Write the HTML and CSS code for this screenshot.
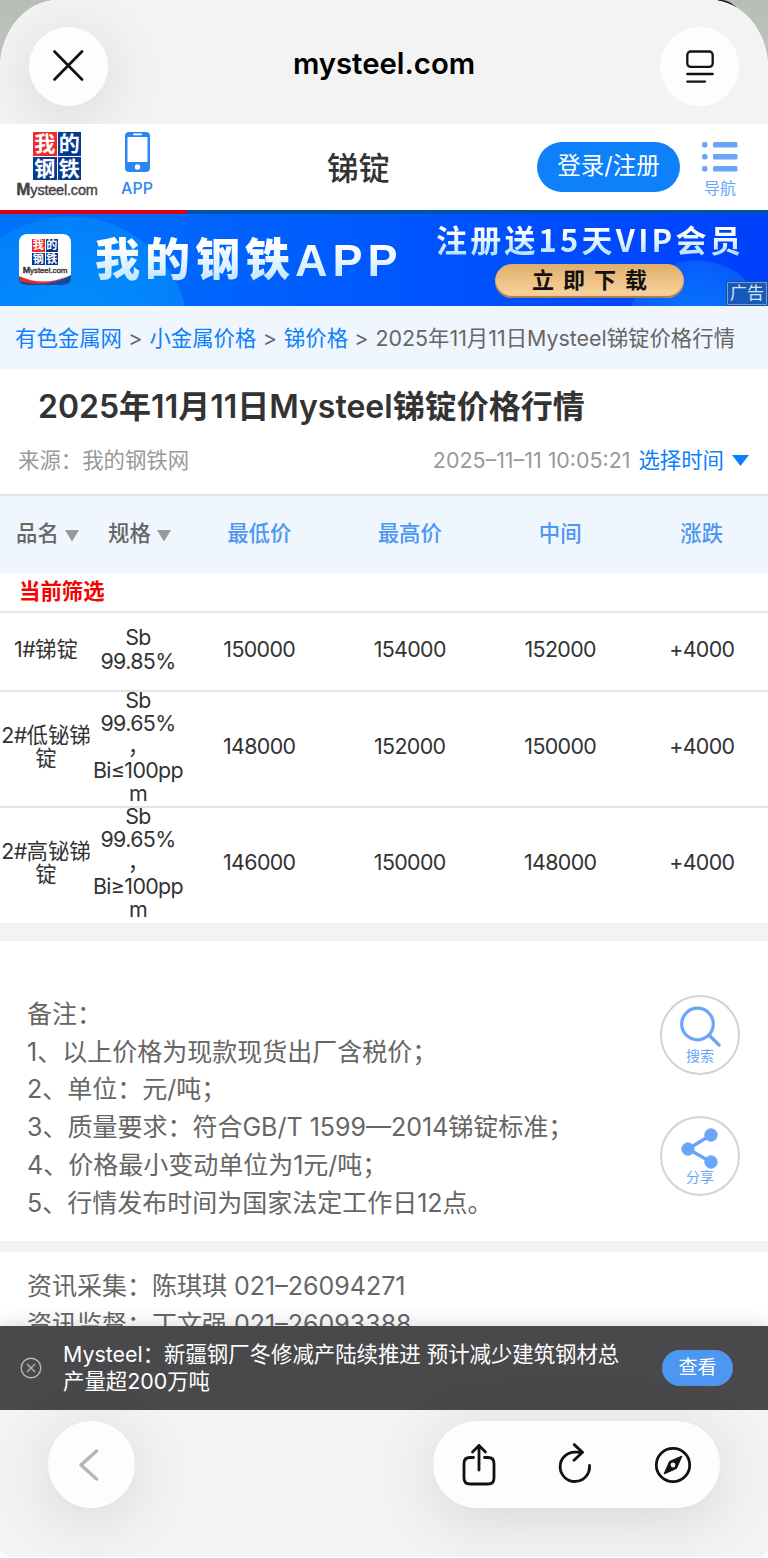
FILE: index.html
```html
<!DOCTYPE html>
<html lang="zh-CN">
<head>
    <meta charset="UTF-8">
    <meta name="viewport" content="width=device-width, initial-scale=1.0">
    <title>2025年11月11日Mysteel锑锭价格行情</title>
    <link rel="stylesheet" href="styles.css">
</head>
<body>
    <svg class="backdrop-mark" width="20" height="12" viewBox="0 0 20 12"><path d="M0 1C8 1 13 4 17 8" fill="none" stroke="#222" stroke-width="3"/></svg>
    <div class="sheet">
        <!-- 顶部浏览器栏 -->
        <div class="browser-top">
            <button class="round-btn shadow">
                <svg width="32" height="32" viewBox="0 0 32 32"><path d="M1.5 1.5L29 29.5M29 1.5L1.5 29.5" stroke="#111" stroke-width="2.7" stroke-linecap="round"/></svg>
            </button>
            <div class="domain">mysteel.com</div>
            <button class="round-btn">
                <svg width="28" height="34" viewBox="0 0 28 34" fill="none" stroke="#111" stroke-width="2.3" stroke-linecap="round"><rect x="1.3" y="2.5" width="25.4" height="15.4" rx="3.5"/><path d="M1.3 25H26.7M1.3 32.6H19"/></svg>
            </button>
        </div>

        <header class="header">
            <div class="logo">
                <div class="tiles"><span class="red">我</span><span>的</span><span>钢</span><span>铁</span></div>
                <div class="logo-name"><b>M</b>ysteel.com</div>
            </div>
            <div class="app-link">
                <svg width="27" height="42" viewBox="0 0 27 42"><rect x="1" y="1" width="25" height="40" rx="4" fill="#2b86f3"/><rect x="3.5" y="6" width="20" height="25" fill="#fff"/><rect x="9" y="2.6" width="9" height="1.6" rx=".8" fill="#fff"/><circle cx="13.5" cy="36" r="2.7" fill="#fff"/></svg>
                <span>APP</span>
            </div>
            <h2 class="channel">锑锭</h2>
            <a class="login">登录/注册</a>
            <div class="nav-link">
                <svg width="36" height="31" viewBox="0 0 36 31" fill="#69a6f7"><rect x="0" y="0" width="5.5" height="5.5" rx="2"/><rect x="11" y="0" width="24.5" height="5.5" rx="1.5"/><rect x="0" y="12" width="5.5" height="5.5" rx="2"/><rect x="11" y="12" width="24.5" height="5.5" rx="1.5"/><rect x="0" y="24" width="5.5" height="5.5" rx="2"/><rect x="11" y="24" width="24.5" height="5.5" rx="1.5"/></svg>
                <span>导航</span>
            </div>
        </header>
        <div class="stripe"></div>

        <!-- APP下载广告 -->
        <div class="banner">
            <div class="app-icon">
                <div class="tiles small"><span class="red">我</span><span>的</span><span>钢</span><span>铁</span></div>
                <div class="logo-name small"><b>M</b>ysteel.com</div>
                <svg class="swoosh" width="52" height="10" viewBox="0 0 52 10"><path d="M0 2Q26 14 52 0V5Q50 10 44 10H8Q1 10 0 5Z" fill="#164a9c"/><path d="M0 1Q24 12 49 1Q26 14 1 6Z" fill="#e22b2e"/></svg>
            </div>
            <div class="banner-title">我的钢铁<span>APP</span></div>
            <div class="banner-right">
                <div class="vip">注册送15天VIP会员</div>
                <div class="download">立即下载</div>
            </div>
            <div class="ad-tag">广告</div>
        </div>

        <nav class="crumbs">
            <a>有色金属网</a><i>&gt;</i><a>小金属价格</a><i>&gt;</i><a>锑价格</a><i>&gt;</i><span>2025年11月11日Mysteel锑锭价格行情</span>
        </nav>

        <section class="article-head">
            <h1>2025年11月11日Mysteel锑锭价格行情</h1>
            <div class="meta">
                <span>来源：我的钢铁网</span>
                <span class="time">2025–11–11 10:05:21</span>
                <a>选择时间</a>
                <svg width="17" height="11" viewBox="0 0 17 11"><path d="M0 0H17L8.5 11Z" fill="#0d80fa"/></svg>
            </div>
        </section>

        <table class="prices">
            <colgroup><col class="c-name"><col class="c-spec"><col class="c-price"><col class="c-price"><col class="c-price"><col></colgroup>
            <thead>
                <tr>
                    <th class="sort">品名<svg width="14" height="12" viewBox="0 0 14 12"><path d="M0 0H14L7 11.5Z" fill="#999"/></svg></th>
                    <th class="sort">规格<svg width="14" height="12" viewBox="0 0 14 12"><path d="M0 0H14L7 11.5Z" fill="#999"/></svg></th>
                    <th>最低价</th>
                    <th>最高价</th>
                    <th>中间</th>
                    <th>涨跌</th>
                </tr>
            </thead>
            <tbody>
                <tr class="filter"><td colspan="6">当前筛选</td></tr>
                <tr class="row">
                    <td><span class="en">1#</span>锑锭</td>
                    <td class="en">Sb<br>99.85%</td>
                    <td class="en">150000</td>
                    <td class="en">154000</td>
                    <td class="en">152000</td>
                    <td class="en">+4000</td>
                </tr>
                <tr class="row tall">
                    <td><span class="en">2#</span>低铋锑<br>锭</td>
                    <td class="en">Sb<br>99.65%<br>，<br>Bi≤100pp<br>m</td>
                    <td class="en">148000</td>
                    <td class="en">152000</td>
                    <td class="en">150000</td>
                    <td class="en">+4000</td>
                </tr>
                <tr class="row tall">
                    <td><span class="en">2#</span>高铋锑<br>锭</td>
                    <td class="en">Sb<br>99.65%<br>，<br>Bi≥100pp<br>m</td>
                    <td class="en">146000</td>
                    <td class="en">150000</td>
                    <td class="en">148000</td>
                    <td class="en">+4000</td>
                </tr>
            </tbody>
        </table>

        <section class="notes">
            <div class="note-text">
                <p>备注：</p>
                <p>1、以上价格为现款现货出厂含税价；</p>
                <p>2、单位：元/吨；</p>
                <p>3、质量要求：符合GB/T 1599—2014锑锭标准；</p>
                <p>4、价格最小变动单位为1元/吨；</p>
                <p>5、行情发布时间为国家法定工作日12点。</p>
            </div>
            <div class="side-tools">
                <div class="tool">
                    <svg width="42" height="42" viewBox="0 0 42 42" fill="none" stroke="#69a6f9" stroke-width="3.2"><circle cx="18.5" cy="18" r="15.8"/><path d="M30 29L40 39" stroke-linecap="round"/></svg>
                    <span>搜索</span>
                </div>
                <div class="tool">
                    <svg width="42" height="42" viewBox="0 0 42 42" fill="#69a6f9" stroke="#69a6f9"><path d="M32 8L9 22L32 35" fill="none" stroke-width="3.4"/><circle cx="32" cy="8" r="6.2"/><circle cx="9" cy="22" r="6.2"/><circle cx="32" cy="35" r="6.2"/></svg>
                    <span>分享</span>
                </div>
            </div>
        </section>

        <section class="contacts">
            <p>资讯采集：陈琪琪 021–26094271</p>
            <p>资讯监督：丁文强 021–26093388</p>
        </section>

        <!-- 底部推送 -->
        <div class="push">
            <svg width="22" height="22" viewBox="0 0 22 22" fill="none" stroke="#b5b5b7" stroke-width="1.4"><circle cx="11" cy="11" r="9.8"/><path d="M7 7L15 15M15 7L7 15"/></svg>
            <div class="push-text">Mysteel：新疆钢厂冬修减产陆续推进 预计减少建筑钢材总<br>产量超200万吨</div>
            <a class="view">查看</a>
        </div>

        <div class="browser-bottom">
            <button class="round-btn back shadow">
                <svg width="20" height="32" viewBox="0 0 20 32"><path d="M17.5 2L2 16L17.5 30" fill="none" stroke="#b5b5b5" stroke-width="3.4" stroke-linecap="round" stroke-linejoin="round"/></svg>
            </button>
            <div class="toolbar shadow">
                <svg width="36" height="44" viewBox="0 0 36 44" fill="none" stroke="#111" stroke-width="2.8" stroke-linecap="round" stroke-linejoin="round"><path d="M12.5 14.5H9Q3 14.5 3 20.5V35Q3 41 9 41H27Q33 41 33 35V20.5Q33 14.5 27 14.5H23.5M18 27V2.5M11.5 9L18 2.5L24.5 9"/></svg>
                <svg width="36" height="44" viewBox="0 0 36 44" fill="none" stroke="#111" stroke-width="2.8" stroke-linecap="round" stroke-linejoin="round"><path d="M31.5 22.5A14.7 14.7 0 1 1 16.8 9.1H24.5M16.2 1.6L24.5 9.3L16 17.2"/></svg>
                <svg width="38" height="44" viewBox="0 0 38 44"><circle cx="19" cy="22" r="16.7" fill="none" stroke="#111" stroke-width="2.8"/><path d="M28 13L22.5 25.5L10 31L15.5 18.5Z" fill="#111" stroke="#111" stroke-width="1" stroke-linejoin="round"/><circle cx="19" cy="22" r="2.4" fill="#fff"/></svg>
            </div>
        </div>
    </div>
</body>
</html>
```

FILE: styles.css
```css
* {
    box-sizing: border-box;
}

body {
    margin: 0;
    min-height: 1558px;
    background: linear-gradient(#b7beb6, #c3c9c4 100px, #fff 140px);
    font-family: Inter, "Noto Sans CJK SC", sans-serif;
    color: #333;
}

h1, h2, p {
    margin: 0;
}

svg {
    display: block;
    flex-shrink: 0;
}

.en {
    letter-spacing: -0.03em;
}

.backdrop-mark {
    position: absolute;
    top: 0;
    right: 30px;
}

.sheet {
    position: relative;
    height: 1557px;
    display: flex;
    flex-direction: column;
    overflow: hidden;
    background: #fff;
    border-radius: 58px 58px 10px 10px / 68px 68px 10px 10px;
}

/* 浏览器栏 */
.browser-top {
    height: 124px;
    padding: 8px 29px 0;
    display: flex;
    justify-content: space-between;
    align-items: center;
    background: #f3f3f3;
}

.round-btn {
    width: 79px;
    height: 79px;
    padding: 0;
    display: flex;
    justify-content: center;
    align-items: center;
    background: #fdfdfd;
    border: 1px solid #fff;
    border-radius: 50%;
}

.shadow {
    box-shadow: 0 10px 60px rgba(0, 0, 0, 0.12);
}

.domain {
    font-size: 29.3px;
    font-weight: 600;
    color: #000;
    padding-bottom: 5px;
}

/* 页头 */
.header {
    position: relative;
    height: 86px;
    padding: 0 30px 0 17px;
    display: grid;
    grid-template-columns: 80px 78px 1fr 143px 58px;
    background: #fff;
}

.logo {
    display: flex;
    flex-direction: column;
    align-items: center;
    padding-top: 8px;
}

.tiles {
    width: 48px;
    height: 48px;
    display: grid;
    grid-template-columns: 1fr 1fr;
    grid-template-rows: 1fr 1fr;
    gap: 1px;
}

.tiles span {
    display: flex;
    justify-content: center;
    align-items: center;
    background: #063a92;
    color: #fff;
    font-size: 21px;
    line-height: 23px;
    font-weight: 700;
}

.tiles .red {
    background: #f02a2c;
}

.logo-name {
    font-family: "Liberation Sans", sans-serif;
    font-size: 14.5px;
    line-height: 19px;
    font-weight: 400;
    color: #444;
    -webkit-text-stroke: 0.4px #444;
    letter-spacing: -0.2px;
    white-space: nowrap;
}

.logo-name b {
    font-size: 17px;
}

.app-link {
    width: 78px;
    padding: 7px 0 0 2px;
    display: flex;
    flex-direction: column;
    align-items: center;
    color: #2b86f3;
    font-size: 16px;
    line-height: 22px;
    font-weight: 500;
}

.app-link span {
    margin-top: 4px;
}

.channel {
    padding: 24px 0 0 152px;
    font-size: 31.4px;
    line-height: 42px;
    font-weight: 500;
    white-space: nowrap;
}

.login {
    height: 50px;
    margin-top: 18px;
    border-radius: 25px;
    background: #0d80fa;
    color: #fff;
    font-size: 23.5px;
    line-height: 48px;
    text-align: center;
}

.nav-link {
    padding: 18px 0 0 22px;
    color: #69a6f7;
    font-size: 16px;
    line-height: 24px;
    white-space: nowrap;
}

.nav-link span {
    display: block;
    margin: 3px 0 0 2px;
}

.stripe {
    height: 4px;
    background: linear-gradient(to right, #dd0012 187px, #0353a4 187px);
}

/* 广告 */
.banner {
    position: relative;
    height: 92px;
    display: flex;
    background:
        radial-gradient(circle at 70px 121px, #0490fb 0, #0380fc 118px, transparent 119px),
        radial-gradient(circle at 697px 117px, #087cff 0, #075dfb 70px, transparent 71px),
        linear-gradient(to right, #0073fc, #0052fe 60%, #0040fb);
}

.app-icon {
    position: relative;
    width: 52px;
    height: 51px;
    margin: 20px 0 0 19px;
    padding-top: 5px;
    display: flex;
    flex-direction: column;
    align-items: center;
    background: #fff;
    border-radius: 8px;
}

.tiles.small {
    width: 26px;
    height: 26px;
}

.tiles.small span {
    font-size: 11px;
    line-height: 12px;
}

.logo-name.small {
    position: relative;
    z-index: 1;
    font-size: 8px;
    line-height: 10px;
    color: #333;
    letter-spacing: -0.1px;
}

.logo-name.small b {
    font-size: 9px;
}

.swoosh {
    position: absolute;
    left: 0;
    bottom: 0;
}

.banner-title {
    width: 340px;
    padding: 10px 0 0 24px;
    font-family: "Noto Sans CJK SC", sans-serif;
    font-size: 45px;
    line-height: 66px;
    font-weight: 900;
    letter-spacing: 5px;
    white-space: nowrap;
    background: linear-gradient(#fff 35%, #b5e1fd 80%);
    background-clip: text;
    color: transparent;
}

.banner-title span {
    font-family: "Liberation Sans", sans-serif;
}

.banner-right {
    padding: 3px 0 0 25px;
}

.vip {
    font-family: "Noto Sans CJK SC", sans-serif;
    font-size: 31px;
    line-height: 44px;
    font-weight: 700;
    letter-spacing: 3.2px;
    white-space: nowrap;
    background: linear-gradient(#fff 35%, #b5e1fd 85%);
    background-clip: text;
    color: transparent;
}

.download {
    width: 189px;
    height: 34px;
    margin: 3px 0 0 59px;
    padding-left: 9px;
    border-radius: 17px;
    background: linear-gradient(#dfae6b, #fbd5a0);
    box-shadow: inset 0 -2px 1px #a87d45;
    color: #111;
    font-size: 22px;
    line-height: 32px;
    font-weight: 700;
    letter-spacing: 9px;
    text-align: center;
}

.ad-tag {
    position: absolute;
    right: 1px;
    bottom: 1px;
    padding: 0 2px;
    border: 1px solid #7c9ad2;
    outline: 1px solid #154fa5;
    background: #1759b8;
    color: #d3e2f5;
    font-size: 17px;
    line-height: 21px;
}

/* 面包屑 */
.crumbs {
    height: 63px;
    padding-left: 15px;
    background: #f0f6fe;
    color: #666;
    font-size: 21.4px;
    line-height: 64px;
    white-space: nowrap;
}

.crumbs i {
    margin: 0 7px 0 6.3px;
    font-style: normal;
}

a {
    color: #0d80fa;
}

.article-head {
    height: 127px;
    border-bottom: 2px solid #e1e4e8;
}

h1 {
    padding: 15px 0 0 38px;
    font-size: 32px;
    line-height: 46px;
    font-weight: 600;
    white-space: nowrap;
}

.meta {
    padding: 14px 19px 0 18px;
    display: flex;
    align-items: center;
    color: #999;
    font-size: 21.4px;
    line-height: 32px;
}

.time {
    margin-left: auto;
}

.meta a {
    margin: 0 8px;
}

/* 价格表 */
.prices {
    width: 100%;
    margin-bottom: 2px;
    table-layout: fixed;
    border-collapse: separate;
    border-spacing: 0;
    font-size: 21.4px;
    line-height: 23.2px;
    text-align: center;
}

.c-name,
.c-spec {
    width: 92px;
}

.c-price {
    width: 150.5px;
}

.prices th,
.prices td {
    padding: 0;
    white-space: nowrap;
}

.prices th {
    height: 77px;
    padding-bottom: 2px;
    background: #f0f6fe;
    color: #4d97f0;
    font-weight: 500;
}

.prices .sort {
    padding-left: 3px;
    color: #666;
}

.sort svg {
    display: inline-block;
    margin-left: 6px;
    vertical-align: -1px;
}

.prices .filter td {
    height: 37px;
    padding: 1px 0 0 19px;
    text-align: left;
    color: #f60000;
    font-weight: 700;
}

/* 行分隔线 */
.row td {
    height: 79px;
    background: linear-gradient(transparent 1px, #e4e4e6 1px, #e4e4e6 3px, transparent 3px);
}

.tall td {
    height: 116px;
}

/* 备注 */
.notes {
    height: 329px;
    padding: 54px 28px 0 27px;
    border-top: 18px solid #f3f3f3;
    border-bottom: 11px solid #f3f3f3;
    display: flex;
    justify-content: space-between;
    flex-shrink: 0;
}

.note-text {
    padding-top: 1px;
}

.notes p,
.contacts p {
    color: #666;
    font-size: 25px;
    line-height: 37.7px;
    white-space: nowrap;
}

.side-tools {
    display: flex;
    flex-direction: column;
    gap: 41px;
}

.tool {
    width: 80px;
    height: 80px;
    padding-top: 9px;
    display: flex;
    flex-direction: column;
    align-items: center;
    border: 2px solid #d3d3d3;
    border-radius: 50%;
    color: #69a6f9;
    font-size: 14px;
    line-height: 16px;
}

.contacts {
    height: 74px;
    padding: 16px 27px 0;
    overflow: hidden;
    flex-shrink: 0;
}

.push {
    height: 84px;
    padding: 0 35px 0 20px;
    display: flex;
    align-items: center;
    flex-shrink: 0;
    background: #49494b;
    box-shadow: 0 -4px 16px rgba(0, 0, 0, 0.12);
}

.push-text {
    margin-left: 21px;
    color: #fff;
    font-size: 21.4px;
    line-height: 26.6px;
    white-space: nowrap;
}

.view {
    width: 71px;
    height: 36px;
    margin-left: auto;
    border-radius: 18px;
    background: #4d97f0;
    color: #fff;
    font-size: 19px;
    line-height: 35px;
    text-align: center;
}

.browser-bottom {
    flex: 1;
    padding: 11px 48px 0;
    display: flex;
    justify-content: space-between;
    align-items: flex-start;
    background: #f3f3f3;
}

.back {
    width: 87px;
    height: 87px;
    padding-right: 6px;
}

.toolbar {
    width: 287px;
    height: 87px;
    padding: 0 27px;
    display: flex;
    justify-content: space-between;
    align-items: center;
    background: #fdfdfd;
    border: 1px solid #fff;
    border-radius: 44px;
}
```
